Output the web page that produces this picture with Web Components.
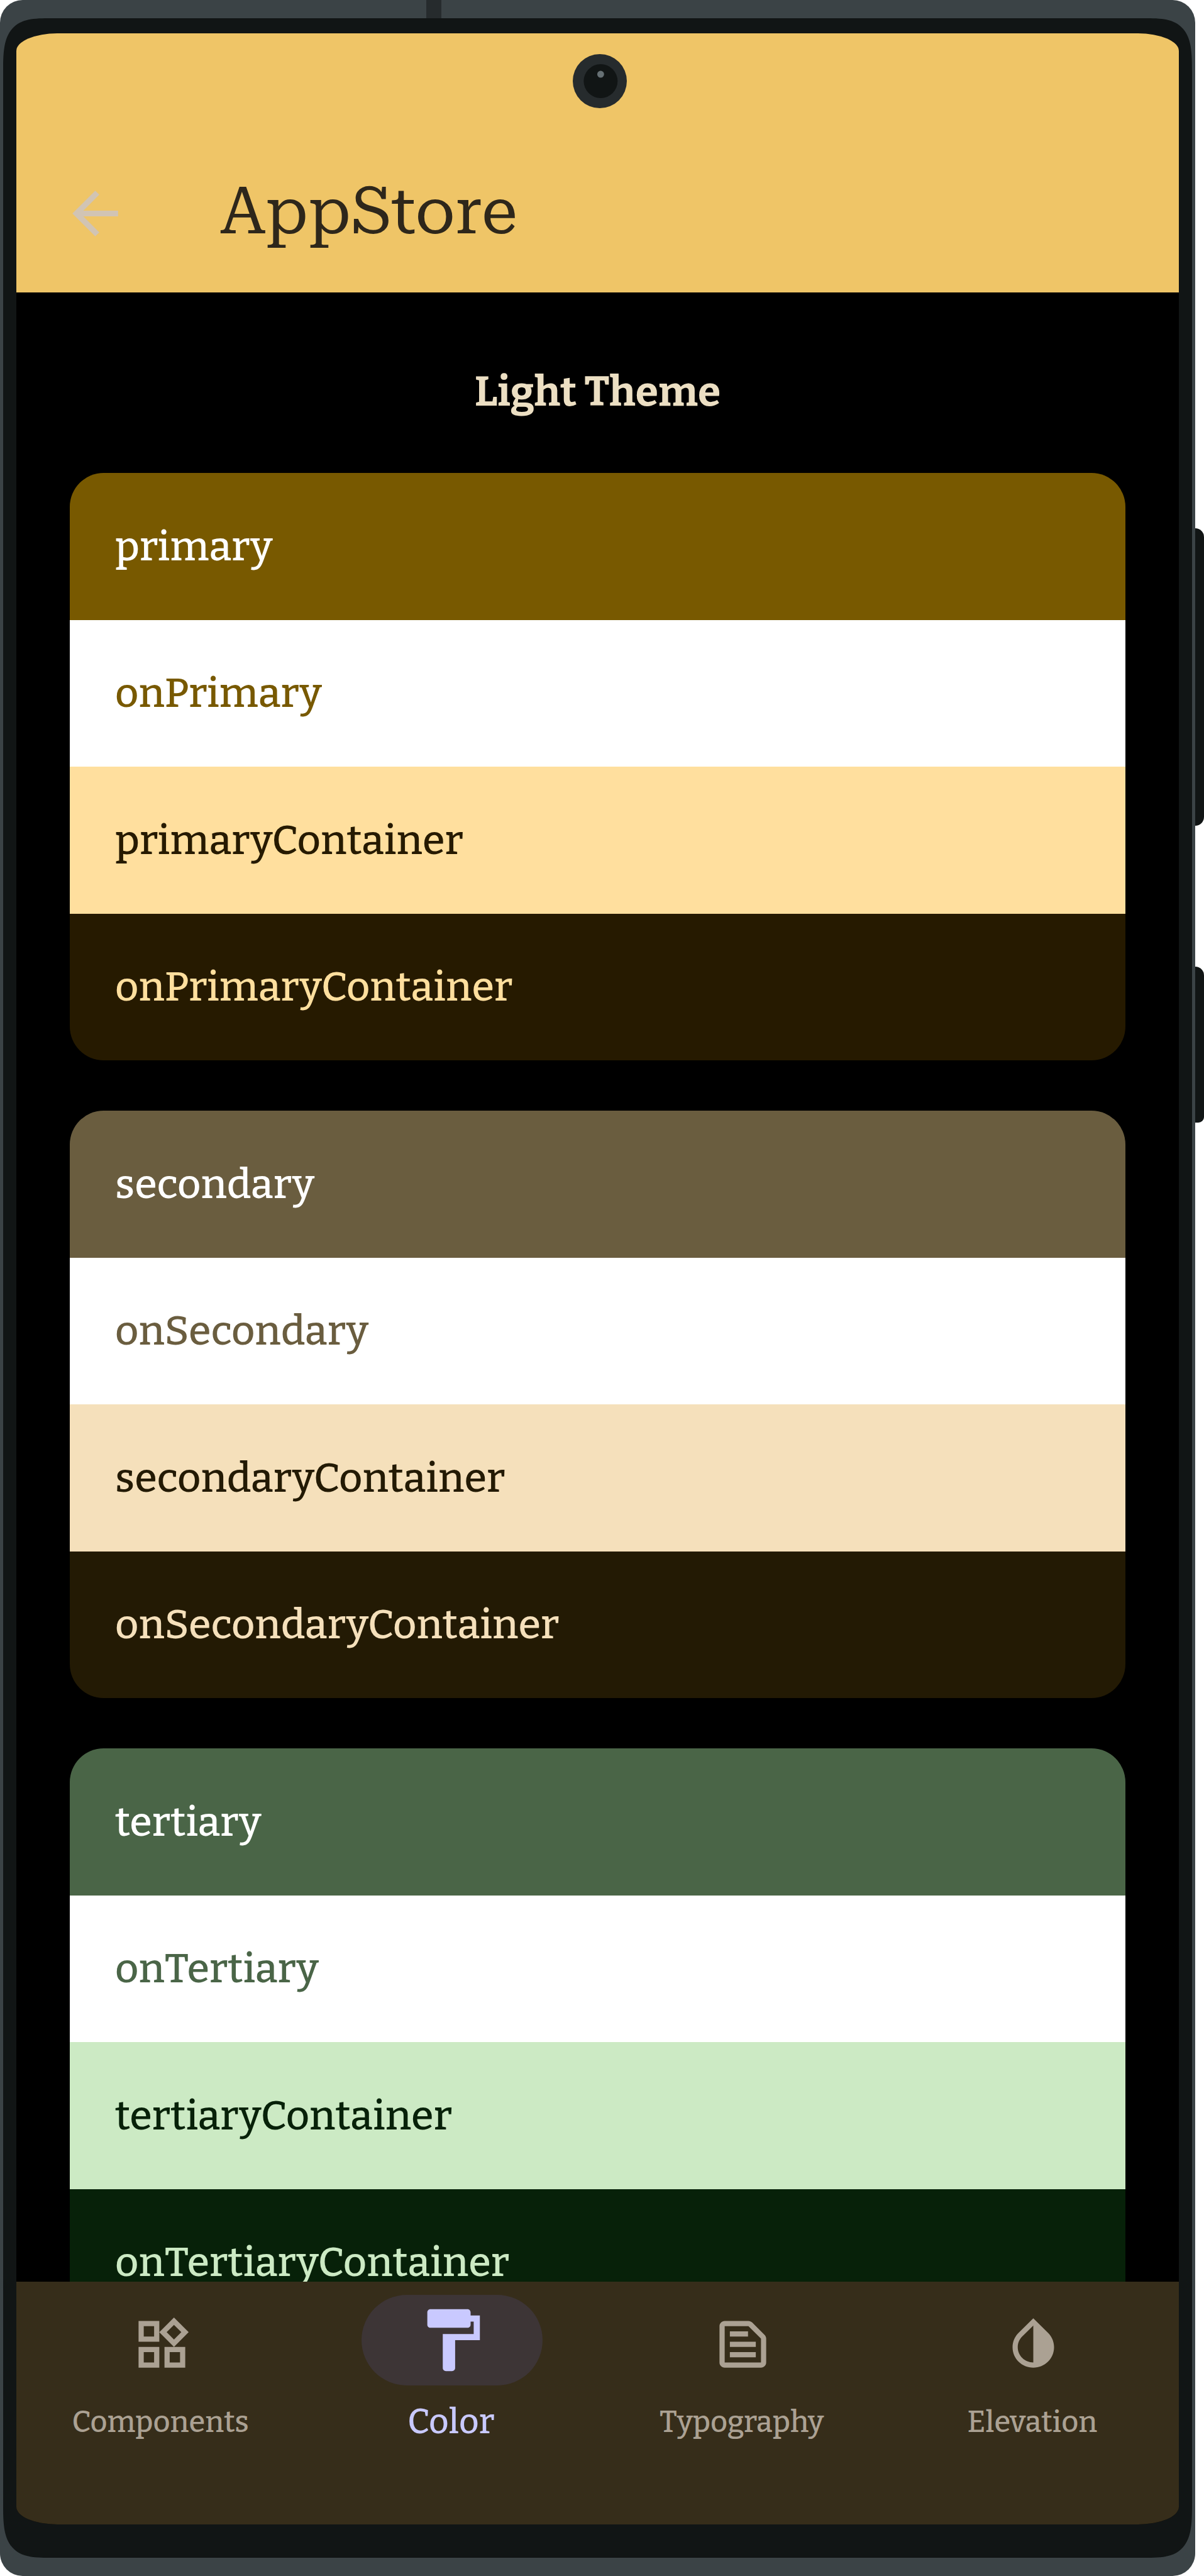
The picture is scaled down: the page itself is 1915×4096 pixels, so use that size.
<!DOCTYPE html>
<html lang="en">
<head>
<meta charset="utf-8">
<meta name="viewport" content="width=device-width, initial-scale=1">
<title>AppStore</title>
<style>
  body { margin: 0; background: #fff; font-family: Bitter, "DejaVu Serif", serif; font-weight: 460; }
</style>
</head>
<body>
<device-frame>
  <app-bar>AppStore</app-bar>
  <theme-page heading="Light Theme">
    <color-card>
      <color-row bg="#785900" fg="#ffffff">primary</color-row>
      <color-row bg="#ffffff" fg="#785900">onPrimary</color-row>
      <color-row bg="#ffdf9e" fg="#261a00">primaryContainer</color-row>
      <color-row bg="#261a00" fg="#ffdf9e">onPrimaryContainer</color-row>
    </color-card>
    <color-card>
      <color-row bg="#6a5d3f" fg="#ffffff">secondary</color-row>
      <color-row bg="#ffffff" fg="#6a5d3f">onSecondary</color-row>
      <color-row bg="#f5e0bb" fg="#231a04">secondaryContainer</color-row>
      <color-row bg="#231a04" fg="#f5e0bb">onSecondaryContainer</color-row>
    </color-card>
    <color-card>
      <color-row bg="#4a6547" fg="#ffffff">tertiary</color-row>
      <color-row bg="#ffffff" fg="#4a6547">onTertiary</color-row>
      <color-row bg="#cceac4" fg="#072109">tertiaryContainer</color-row>
      <color-row bg="#072109" fg="#cceac4">onTertiaryContainer</color-row>
    </color-card>
  </theme-page>
  <nav-bar slot="nav">
    <nav-item icon="components">Components</nav-item>
    <nav-item icon="color" selected>Color</nav-item>
    <nav-item icon="typography">Typography</nav-item>
    <nav-item icon="elevation">Elevation</nav-item>
  </nav-bar>
</device-frame>

<script>
const define = (name, render) => customElements.define(name, class extends HTMLElement {
  constructor() { super(); this.attachShadow({ mode: 'open' }); }
  connectedCallback() { this.shadowRoot.innerHTML = render(this); }
});

const icons = {
  back: 'M20 11H7.83l5.59-5.59L12 4l-8 8 8 8 1.41-1.41L7.83 13H20v-2z',
  components: 'M16.66 4.52l2.83 2.83-2.83 2.83-2.83-2.83 2.83-2.83M9 5v4H5V5h4m10 10v4h-4v-4h4M9 15v4H5v-4h4m7.66-13.31L11 7.34 16.66 13l5.66-5.66-5.66-5.65zM11 3H3v8h8V3zm10 10h-8v8h8v-8zm-10 0H3v8h8v-8z',
  color: 'M18 4V3c0-.55-.45-1-1-1H5c-.55 0-1 .45-1 1v4c0 .55.45 1 1 1h12c.55 0 1-.45 1-1V6h1v4H9v11c0 .55.45 1 1 1h2c.55 0 1-.45 1-1v-9h8V4h-3z',
  typography: 'M14.17 5L19 9.83V19H5V5h9.17m0-2H5c-1.1 0-2 .9-2 2v14c0 1.1.9 2 2 2h14c1.1 0 2-.9 2-2V9.83c0-.53-.21-1.04-.59-1.41l-4.83-4.83c-.37-.38-.88-.59-1.41-.59zM7 15h10v2H7v-2zm0-4h10v2H7v-2zm0-4h7v2H7V7z',
  elevation: 'M12 4.81V19c-3.31 0-6-2.63-6-5.87 0-1.56.62-3.03 1.75-4.14L12 4.81M12 2L6.35 7.56C4.9 8.99 4 10.96 4 13.13 4 17.48 7.58 21 12 21s8-3.52 8-7.87c0-2.17-.9-4.14-2.35-5.57L12 2z'
};
const svg = name => `<svg viewBox="0 0 24 24" aria-hidden="true"><path fill="currentColor" d="${icons[name]}"/></svg>`;

/* Phone body, bezel, screen and the two keys on its right side */
define('device-frame', () => `
  <style>
    :host { display: flex; height: 100vh; }
    .body { position: relative; flex: 1; min-width: 0; display: flex; box-sizing: border-box;
      padding: 29px 5px; border-radius: 36px; background: #3b4346; }
    .antenna { position: absolute; top: 0; left: 678px; width: 24px; height: 29px; background: #262b2d; }
    .bezel { flex: 1; min-width: 0; display: flex; padding: 24px 21px 53px;
      border-radius: 50px; background: #111515; }
    @supports (corner-shape: superellipse(1.7)) {
      .bezel { border-radius: 76px / 86px; corner-shape: superellipse(1.7); }
    }
    .screen { position: relative; flex: 1; min-width: 0; display: flex; flex-direction: column;
      overflow: hidden; border-radius: 65px / 28px; background: #000; }
    .camera { position: absolute; top: 33px; left: calc(50% - 40px); width: 86px; height: 86px; }
    .keys { display: flex; flex-direction: column; gap: 224px; width: 14px; padding-top: 840px; }
    .keys i { height: 473px; border-radius: 0 14px 14px 0; background: #111515; }
    .keys i + i { height: 248px; border-radius: 0 14px 9px 0; }
  </style>
  <div class="body">
    <div class="antenna"></div>
    <div class="bezel">
      <div class="screen">
        <slot></slot>
        <slot name="nav"></slot>
        <svg class="camera" viewBox="0 0 126 126" aria-hidden="true">
          <circle cx="63" cy="63" r="63" fill="#262b2d"/>
          <circle cx="65" cy="63" r="39.5" fill="#111515"/>
          <circle cx="65" cy="47" r="8" fill="#667074"/>
        </svg>
      </div>
    </div>
  </div>
  <div class="keys"><i></i><i></i></div>`);

define('app-bar', () => `
  <style>
    :host { display: block; flex: none; padding-top: 160px; background: #efc567; }
    header { display: flex; align-items: center; gap: 144px; height: 252px; padding: 0 71px; }
    button { display: flex; padding: 0; border: 0; background: none; color: #d1c4b4; }
    svg { width: 109px; height: 109px; }
    h1 { margin: 0; padding-bottom: 6px; color: #2e271b;
      font: 400 104px/120px "Roboto Serif", "DejaVu Serif", serif; }
  </style>
  <header>
    <button type="button" aria-label="Back">${svg('back')}</button>
    <h1><slot></slot></h1>
  </header>`);

define('theme-page', el => `
  <style>
    :host { display: block; flex: 1; min-height: 0; overflow: hidden; padding: 0 85px; }
    h2 { margin: 0; padding: 112px 0 83px; font-size: 66px; line-height: 92px; font-weight: 700;
      text-align: center; color: #ecdfc3; }
    .cards { display: flex; flex-direction: column; gap: 80px; }
  </style>
  <h2>${el.getAttribute('heading')}</h2>
  <div class="cards"><slot></slot></div>`);

define('color-card', () => `
  <style>
    :host { display: grid; grid-template-rows: repeat(4, 1fr); height: 934px;
      border-radius: 54px; overflow: hidden; }
  </style>
  <slot></slot>`);

define('color-row', el => `
  <style>
    :host { display: flex; align-items: center; padding: 0 72px; font-size: 65px; line-height: 92px;
      background: ${el.getAttribute('bg')}; color: ${el.getAttribute('fg')}; }
  </style>
  <slot></slot>`);

define('nav-bar', () => `
  <style>
    :host { display: block; flex: none; background: #362d1a; }
    nav { display: flex; height: 386px; }
  </style>
  <nav><slot></slot></nav>`);

define('nav-item', el => `
  <style>
    :host { flex: 1 1 0; min-width: 0; display: flex; }
    a { flex: 1; display: flex; flex-direction: column; align-items: center; gap: 28px;
      padding-top: 21px; color: #aba193; text-decoration: none; font-size: 47px; line-height: 60px; }
    .icon { display: flex; align-items: center; justify-content: center; box-sizing: border-box;
      width: 288px; height: 144px; padding-top: 12px; border-radius: 72px; }
    .label { padding-right: 4px; }
    svg { width: 99px; height: 99px; }
    :host([selected]) a { color: #c9c9ff; font-size: 55px; }
    :host([selected]) .icon { padding: 0; background: #3d3536; }
    :host([selected]) svg { width: 118px; height: 118px; }
  </style>
  <a href="#${el.getAttribute('icon')}"${el.hasAttribute('selected') ? ' aria-current="page"' : ''}>
    <span class="icon">${svg(el.getAttribute('icon'))}</span>
    <span class="label"><slot></slot></span>
  </a>`);
</script>
</body>
</html>
